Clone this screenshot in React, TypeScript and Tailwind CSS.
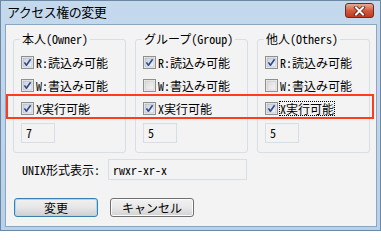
import React from "react";

function Check({ checked }: { checked: boolean }) {
  return (
    <svg width="13" height="13" viewBox="0 0 13 13" className="shrink-0">
      <defs>
        <linearGradient id={checked ? "cbg1" : "cbg0"} x1="0" y1="0" x2="1" y2="1">
          <stop offset="0" stopColor={checked ? "#c9ced6" : "#d8d8d8"} />
          <stop offset="1" stopColor={checked ? "#f4f5f7" : "#f7f7f7"} />
        </linearGradient>
      </defs>
      <rect x="0.5" y="0.5" width="12" height="12" fill="#f4f4f4" stroke="#8e8f8f" />
      <rect x="2" y="2" width="9" height="9" fill={`url(#${checked ? "cbg1" : "cbg0"})`} stroke={checked ? "#aab2bd" : "#c4c4c4"} strokeWidth="0.6" />
      {checked && (
        <path d="M3.4 6.4 L5.4 9.2 L9.6 3.2" fill="none" stroke="#2c4a94" strokeWidth="1.6" strokeLinejoin="round" />
      )}
    </svg>
  );
}

function Row({ checked, label, focus }: { checked: boolean; label: string; focus?: boolean }) {
  return (
    <div className="flex h-[23px] items-center gap-[2px]">
      <Check checked={checked} />
      <span
        className={
          "text-[12px] leading-[13px] text-black whitespace-nowrap " +
          (focus ? "outline outline-1 outline-dotted outline-black outline-offset-0" : "")
        }
      >
        {label}
      </span>
    </div>
  );
}

function Group({ title, w, value }: { title: string; w: boolean; value: string }) {
  return (
    <div className="relative w-[113px] h-[114px] rounded-[3px] border border-[#d5dfe5] pl-[7px] pt-[11px]">
      <span className="absolute left-[6px] top-[-8px] px-[2px] bg-[#f3f3f3] text-[12px] leading-[14px] text-black whitespace-nowrap">
        {title}
      </span>
      <Row checked={true} label="R:読込み可能" />
      <Row checked={w} label="W:書込み可能" />
      <Row checked={true} label="X実行可能" focus={title === "他人(Others)"} />
      <div className="mt-[3px] w-[34px] h-[20px] border border-[#d5dfe5] flex items-center pl-[4px] text-[12px] text-black">
        {value}
      </div>
    </div>
  );
}

export default function App() {
  return (
    <div className="relative w-[381px] h-[231px] border border-[#6c88a4] bg-gradient-to-b from-[#c5d9ed] to-[#b9d0e8] flex flex-col font-['Noto_Sans_CJK_JP','Noto_Sans',sans-serif] [font-feature-settings:'hwid']">
      <div className="h-[23px] flex items-start justify-between pl-[6px] pr-[6px]">
        <span className="mt-[3px] text-[13px] leading-[16px] text-black tracking-[-0.5px]">アクセス権の変更</span>
        <div className="mt-[2px] w-[29px] h-[15px] rounded-[3px] border border-[#6e2a1e] bg-gradient-to-b from-[#e9a996] via-[#d35b40] to-[#c0391c] flex items-center justify-center">
          <svg width="13" height="10" viewBox="0 0 13 10">
            <path d="M3 1.5 L10 8.5 M10 1.5 L3 8.5" stroke="#5a1f17" strokeWidth="3.6" strokeLinecap="square" />
            <path d="M3 1.5 L10 8.5 M10 1.5 L3 8.5" stroke="#ffffff" strokeWidth="2" strokeLinecap="square" />
          </svg>
        </div>
      </div>
      <div className="flex-1 ml-[4px] mr-[3px] mb-[3px] border border-[#8ba6c0] bg-[#f3f3f3] flex flex-col">
        <div className="mt-[14px] ml-[7px] flex gap-[9px]">
          <Group title="本人(Owner)" w={true} value="7" />
          <Group title="グループ(Group)" w={false} value="5" />
          <Group title="他人(Others)" w={false} value="5" />
        </div>
        <div className="mt-[6px] ml-[16px] flex items-center">
          <span className="w-[86px] text-[12px] text-black whitespace-nowrap">UNIX形式表示:</span>
          <div className="w-[139px] h-[21px] border border-[#d5dfe5] flex items-center pl-[4px] text-[12px] text-black">
            rwxr-xr-x
          </div>
        </div>
        <div className="mt-[18px] ml-[8px] flex gap-[12px]">
          <div className="w-[84px] h-[19px] rounded-[3px] border border-[#3c7fb1] shadow-[inset_0_0_0_1px_#9fdcf5] bg-gradient-to-b from-[#f1f1f1] via-[#e6e6e6] to-[#cfcfcf] flex items-center justify-center text-[12px] text-black">
            変更
          </div>
          <div className="w-[84px] h-[19px] rounded-[3px] border border-[#707070] shadow-[inset_0_0_0_1px_#fbfbfb] bg-gradient-to-b from-[#f2f2f2] via-[#e8e8e8] to-[#d2d2d2] flex items-center justify-center text-[12px] text-black">
            キャンセル
          </div>
        </div>
      </div>
      <div className="absolute left-[5px] top-[93px] w-[368px] h-[25px] border-2 border-[#ff3c1e]" />
    </div>
  );
}
